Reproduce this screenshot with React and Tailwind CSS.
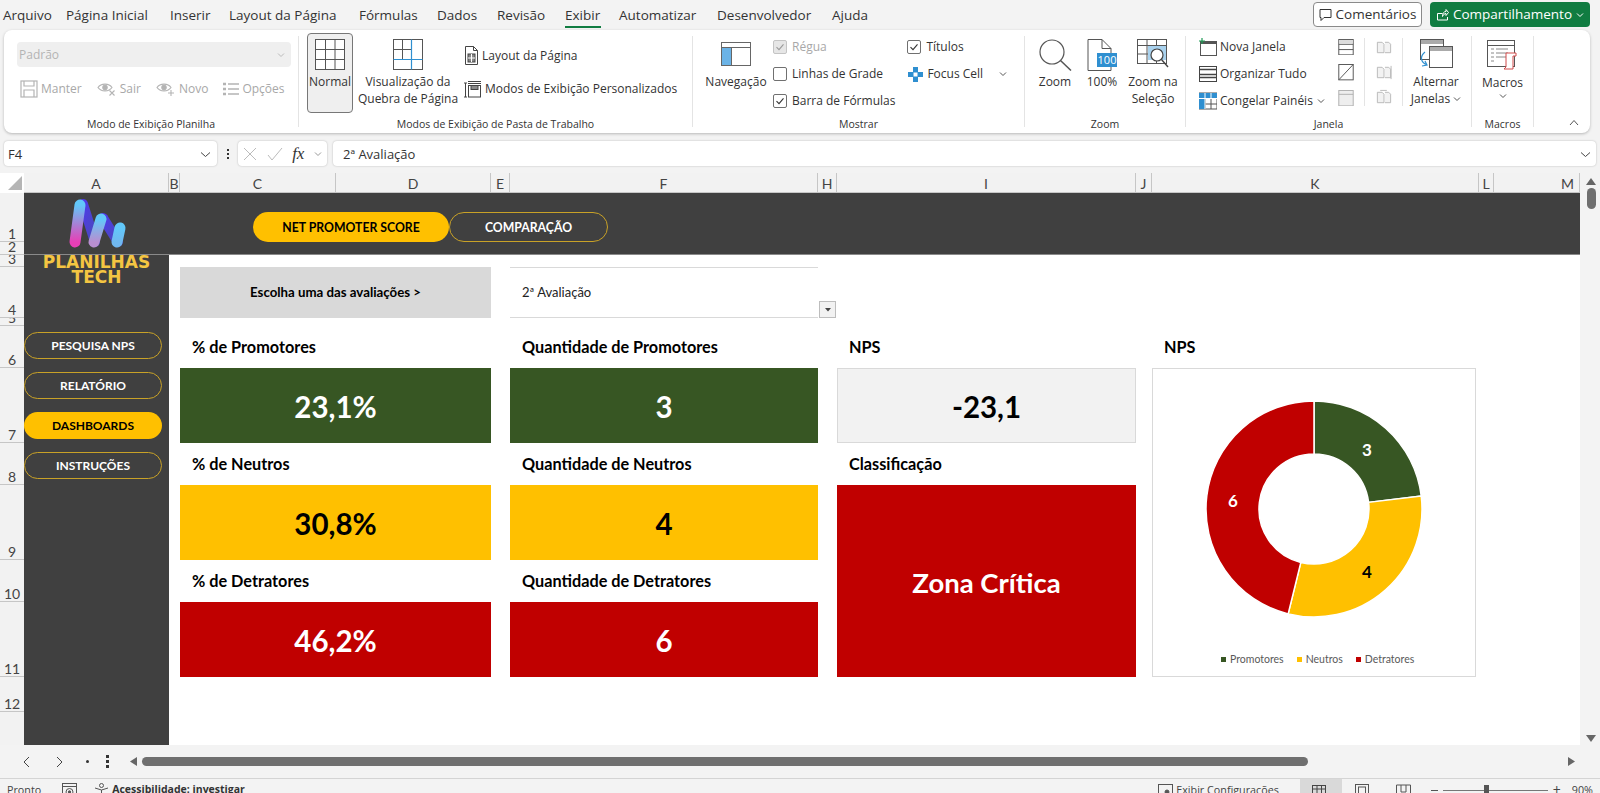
import React from 'react';

const ui = { fontFamily: '"Open Sans", "Noto Sans", sans-serif' };
const cell = { fontFamily: 'Lato, "Open Sans", sans-serif' };

const Chevron = ({ className = '', color = '#555' }) => (
  <svg width="8" height="6" viewBox="0 0 8 6" className={className}><path d="M1 1.500 L4 4.500 L7 1.500" fill="none" stroke={color} strokeWidth="1" /></svg>
);

const Check = ({ checked, muted, className = '' }) => (
  <span className={`flex h-[14px] w-[14px] shrink-0 items-center justify-center rounded-[2px] border ${muted ? 'border-[#c4c4c4] bg-[#e6e6e6]' : 'border-[#707070] bg-white'} ${className}`}>
    {checked && <svg width="10" height="10" viewBox="0 0 10 10"><path d="M1.500 5.200 L4 7.600 L8.500 2.400" fill="none" stroke={muted ? '#9a9a9a' : '#333'} strokeWidth="1.1" /></svg>}
  </span>
);

const GridIcon = ({ blue }) => (
  <svg width="30" height="31" viewBox="0 0 30 31">
    <rect x="0.5" y="0.5" width="29" height="30" fill="#fff" stroke="#555" />
    {blue ? (
      <>
        <path d="M0.5 10.500H18M0.5 20.500H18" stroke="#555" />
        <path d="M9.500 .5V20" stroke="#555" />
        <path d="M18.500 .5V30.500M.5 20.500H29.500" stroke="#2f8fd0" strokeWidth="1.2" />
      </>
    ) : (
      <path d="M.5 10.500H29.500M.5 20.500H29.500M10.500 .5V30.500M20 .5V30.500" stroke="#555" />
    )}
  </svg>
);

const Manter = () => (
  <svg width="18" height="18" viewBox="0 0 18 18" fill="none" stroke="#b4b4b4" strokeWidth="1.2"><rect x="1" y="1" width="16" height="16" /><path d="M4 1v5h10V1M4 17v-7h10v7" /></svg>
);
const Eye = ({ plus }) => (
  <svg width="20" height="16" viewBox="0 0 20 16" fill="none" stroke="#b4b4b4" strokeWidth="1.1">
    <path d="M1 6.500C4 2 12 2 15 6.500C12 11 4 11 1 6.500Z" /><circle cx="8" cy="6.500" r="2.200" fill="#b4b4b4" />
    {plus ? <path d="M15 9v6M12 12h6" /> : <path d="M12.500 9.500l5 5M17.500 9.500l-5 5" />}
  </svg>
);
const Lines = () => (
  <svg width="16" height="14" viewBox="0 0 16 14" stroke="#b4b4b4" strokeWidth="1.3"><path d="M5 2h11M5 7h11M5 12h11" /><path d="M0 2h3M0 7h3M0 12h3" strokeWidth="2.400" /></svg>
);
const PageLayout = () => (
  <svg width="15" height="19" viewBox="0 0 15 19" fill="none" stroke="#444"><path d="M1.500 .5h8l4 4v14h-12z" /><path d="M9.500 .5v4h4" /><rect x="4" y="8" width="7" height="8" fill="#888" stroke="#444" /><path d="M7.500 8v8M4 12h7" stroke="#fff" /></svg>
);
const CustomViews = () => (
  <svg width="18" height="18" viewBox="0 0 18 18" fill="none" stroke="#444"><path d="M4 1.500h13M4 3.500h13" /><rect x="4.500" y="5.500" width="12" height="11.500" /><rect x="7" y="5.500" width="7" height="4" fill="#888" /><path d="M1.500 3v14M0 3h3M0 17h3" /></svg>
);
const Nav = () => (
  <svg width="30" height="24" viewBox="0 0 30 24" className="mt-[3px]"><rect x=".5" y=".5" width="29" height="23" fill="#fff" stroke="#666" /><rect x="1" y="5" width="9" height="18" fill="#6bb3e6" /><path d="M.5 5.500h29M10.500 5.500v18" stroke="#666" /></svg>
);
const FocusCell = () => (
  <svg width="17" height="17" viewBox="0 0 17 17"><rect x="6" y="1" width="5" height="15" fill="#2f8fd0" /><rect x="1" y="6" width="15" height="5" fill="#2f8fd0" /><rect x="6.500" y="6.500" width="4" height="4" fill="#fff" /></svg>
);
const ZoomGlass = () => (
  <svg width="33" height="32" viewBox="0 0 33 32" fill="none" stroke="#555" strokeWidth="1.2"><circle cx="13" cy="13" r="12" fill="#fff" /><path d="M21.500 21.500L32 31.500" strokeWidth="1.500" /></svg>
);
const Hundred = () => (
  <svg width="30" height="32" viewBox="0 0 30 32"><path d="M1 .5h14l9 9v22H1z" fill="#fff" stroke="#555" /><path d="M15 .5v9h9" fill="none" stroke="#555" /><rect x="10" y="14" width="20" height="14" fill="#2f8fd0" /><text x="20" y="25" fontSize="11" textAnchor="middle" fill="#fff" fontFamily="Open Sans">100</text></svg>
);
const ZoomSel = () => (
  <svg width="32" height="32" viewBox="0 0 32 32" fill="none" stroke="#555"><rect x=".5" y=".5" width="29" height="24" fill="#fff" /><path d="M.5 6.500h29M.5 15h29M10 .5v24M19.500 .5v24" /><rect x="11" y="7" width="18" height="14" fill="#a9d2ee" stroke="none" /><circle cx="20" cy="16" r="6" fill="#fff" stroke="#444" strokeWidth="1.2" /><path d="M24.500 20.500L31 28" stroke="#444" strokeWidth="1.400" /></svg>
);
const NewWin = () => (
  <svg width="18" height="18" viewBox="0 0 18 18" fill="none"><rect x="1.500" y="3.500" width="16" height="14" stroke="#555" /><path d="M1 5h16" stroke="#555" strokeWidth="2" /><path d="M3 0v6M0 3h6" stroke="#1f9a55" strokeWidth="1.2" /></svg>
);
const Arrange = () => (
  <svg width="18" height="18" viewBox="0 0 18 18" fill="none" stroke="#444"><rect x=".5" y="1.500" width="17" height="15" /><path d="M.5 4.500h17M.5 9.500h17M.5 12.500h17" strokeWidth="1.400" /></svg>
);
const Freeze = () => (
  <svg width="18" height="18" viewBox="0 0 18 18"><rect x="0" y="1" width="18" height="16" fill="#fff" stroke="#555" /><path d="M6 1v16M12 1v16M0 6.500h18M0 12h18" stroke="#555" /><rect x="0" y="1" width="6" height="16" fill="#2f8fd0" /><rect x="0" y="1" width="18" height="5" fill="#2f8fd0" /><path d="M6 1v16M0 6.500h18M12 1v5" stroke="#fff" /></svg>
);
const SplitA = () => (
  <svg width="16" height="17" viewBox="0 0 16 17" fill="none" stroke="#555"><rect x=".5" y=".5" width="15" height="16" /><path d="M.5 5.500h15M.5 11h15" /><rect x="1" y="1" width="14" height="4" fill="#ddd" stroke="none" /></svg>
);
const SplitB = () => (
  <svg width="16" height="17" viewBox="0 0 16 17" fill="none" stroke="#555"><rect x=".5" y=".5" width="15" height="16" /><path d="M.5 16.500L15.500 .5" /></svg>
);
const SplitC = () => (
  <svg width="16" height="17" viewBox="0 0 16 17" fill="#eee" stroke="#b0b0b0"><rect x=".5" y=".5" width="15" height="16" /><path d="M.5 4.500h15" /></svg>
);
const Mini = ({ v }) => (
  <svg width="18" height="18" viewBox="0 0 18 18" fill="none" stroke="#b8b8b8"><path d="M2 3.500h5l2 2v9H2zM10 3.500h4l2 2v9h-6" fill="#f2f2f2" />{v === 1 && <path d="M16.500 2v14" />}{v === 2 && <path d="M5 1.500h7" />}</svg>
);
const Switch = () => (
  <svg width="36" height="33" viewBox="0 0 36 33" fill="none"><rect x="2.500" y=".5" width="23" height="20" fill="#fff" stroke="#555" /><rect x="3" y="1" width="22" height="4" fill="#aaa" /><rect x="11.500" y="7.500" width="23" height="21" fill="#fff" stroke="#555" /><rect x="12" y="8" width="22" height="4" fill="#aaa" /><path d="M7 13C2 17 2 23 9 26M4 27l5-1-2-4" stroke="#2f8fd0" strokeWidth="1.2" /></svg>
);
const MacroIcon = () => (
  <svg width="31" height="31" viewBox="0 0 31 31" fill="none"><rect x=".5" y=".5" width="27" height="26" fill="#fff" stroke="#555" /><path d="M.5 5.500h27" stroke="#555" /><path d="M4 9h3M9 9h12M4 13h3M9 13h12M4 17h3M9 17h10M4 21h3" stroke="#888" /><path d="M19 13h10v3h-3v13h-9l2-2V13" fill="#fff" stroke="#d04b4b" /></svg>
);

const Big = ({ icon, lines, chevron, className = '' }) => (
  <div className={`flex flex-col items-center ${className}`}>
    <div className="flex h-[31px] items-start justify-center">{icon}</div>
    <div className="mt-[3px] text-center text-[12px] leading-[17px] text-[#333] whitespace-nowrap">
      {lines.map((l, i) => <div key={i} className="flex items-center justify-center gap-[3px]">{l}{chevron && i === lines.length - 1 && <Chevron />}</div>)}
    </div>
  </div>
);

const Group = ({ label, className, children }) => (
  <div className={`flex h-full shrink-0 flex-col ${className}`}>
    <div className="min-h-0 flex-1">{children}</div>
    <div className="flex h-[20px] items-start justify-center pt-[4px] text-[10.5px] leading-[14px] text-[#333]">{label}</div>
  </div>
);

const Divider = () => <div className="mt-[6px] h-[91px] w-px shrink-0 bg-[#e4e4e4]" />;

const Small = ({ icon, text, muted }) => (
  <div className={`flex items-center gap-[3px] text-[12px] ${muted ? 'text-[#a8a8a8]' : 'text-[#333]'}`}>{icon}<span className="whitespace-nowrap">{text}</span></div>
);

const Ribbon = () => (
  <div className="mx-[4px] flex h-[103px] w-[1586px] shrink-0 rounded-[8px] bg-white shadow-[0_1px_3px_rgba(0,0,0,0.25)]">
    <Group label="Modo de Exibição Planilha" className="w-[294px]">
      <div className="px-[13px] pt-[12px]">
        <div className="flex h-[25px] w-[274px] items-center justify-between rounded-[4px] bg-[#efefef] pl-[2px] pr-[6px] text-[12px] text-[#b4b4b4]">Padrão <Chevron color="#bbb" /></div>
        <div className="mt-[13px] flex items-center pl-[3px]">
          <Small muted icon={<Manter />} text="Manter" />
          <div className="ml-[15px]"><Small muted icon={<Eye />} text="Sair" /></div>
          <div className="ml-[15px]"><Small muted icon={<Eye plus />} text="Novo" /></div>
          <div className="ml-[15px]"><Small muted icon={<Lines />} text="Opções" /></div>
        </div>
      </div>
    </Group>
    <Divider />
    <Group label="Modos de Exibição de Pasta de Trabalho" className="w-[393px]">
      <div className="flex pl-[8px] pt-[3px]">
        <div className="flex h-[80px] w-[46px] flex-col items-center rounded-[4px] border border-[#777] bg-[#efefef] pt-[5px]">
          <GridIcon />
          <div className="mt-[3px] text-[12px] leading-[17px] text-[#333]">Normal</div>
        </div>
        <div className="w-[110px] pt-[6px]"><Big icon={<GridIcon blue />} lines={['Visualização da', 'Quebra de Página']} /></div>
        <div className="ml-[1px] flex flex-col gap-[15px] pt-[13px]">
          <Small icon={<PageLayout />} text="Layout da Página" />
          <Small icon={<CustomViews />} text="Modos de Exibição Personalizados" />
        </div>
      </div>
    </Group>
    <Divider />
    <Group label="Mostrar" className="w-[331px]">
      <div className="flex pt-[8px]">
        <div className="w-[80px] pl-[6px] pt-[1px]"><Big icon={<Nav />} lines={['Navegação']} /></div>
        <div className="flex flex-col gap-[9px]">
          <div className="flex items-center gap-[5px] text-[12px] leading-[18px] text-[#a8a8a8]"><Check checked muted />Régua</div>
          <div className="flex items-center gap-[5px] text-[12px] leading-[18px] text-[#333]"><Check />Linhas de Grade</div>
          <div className="flex items-center gap-[5px] text-[12px] leading-[18px] text-[#333]"><Check checked />Barra de Fórmulas</div>
        </div>
        <div className="ml-[12px] flex flex-col gap-[9px]">
          <div className="flex items-center gap-[5px] text-[12px] leading-[18px] text-[#333]"><Check checked />Títulos</div>
          <div className="flex items-center text-[12px] leading-[18px] text-[#333]"><FocusCell /><span className="ml-[3px]">Focus Cell</span><Chevron className="ml-[16px]" /></div>
        </div>
      </div>
    </Group>
    <Divider />
    <Group label="Zoom" className="w-[160px]">
      <div className="flex pl-[2px] pt-[9px]">
        <div className="w-[56px]"><Big icon={<ZoomGlass />} lines={['Zoom']} /></div>
        <div className="w-[38px]"><Big icon={<Hundred />} lines={['100%']} /></div>
        <div className="ml-[4px] w-[56px]"><Big icon={<ZoomSel />} lines={['Zoom na', 'Seleção']} /></div>
      </div>
    </Group>
    <Divider />
    <Group label="Janela" className="w-[285px]">
      <div className="flex pt-[8px]">
        <div className="ml-[13px] flex w-[139px] flex-col gap-[9px]">
          <Small icon={<NewWin />} text="Nova Janela" />
          <Small icon={<Arrange />} text="Organizar Tudo" />
          <div className="flex items-center gap-[4px]"><Small icon={<Freeze />} text="Congelar Painéis" /><Chevron /></div>
        </div>
        <div className="flex h-[68px] w-[27px] flex-col items-start gap-[9px] border-r border-[#e4e4e4] pt-[1px]"><SplitA /><SplitB /><SplitC /></div>
        <div className="flex h-[68px] w-[38px] flex-col items-start gap-[8px] border-r border-[#e4e4e4] pl-[10px] pt-[1px]"><Mini /><Mini v={1} /><Mini v={2} /></div>
        <div className="w-[66px] pt-[1px]"><Big icon={<Switch />} lines={['Alternar', 'Janelas']} chevron /></div>
      </div>
    </Group>
    <Divider />
    <Group label="Macros" className="w-[61px]">
      <div className="pt-[10px]"><Big icon={<MacroIcon />} lines={['Macros']} />
        <div className="mt-[2px] flex justify-center"><Chevron /></div>
      </div>
    </Group>
    <Divider />
    <div className="flex flex-1 items-end justify-end pb-[7px] pr-[11px]">
      <svg width="10" height="7" viewBox="0 0 10 7"><path d="M1 6L5 1.500L9 6" fill="none" stroke="#555" /></svg>
    </div>
  </div>
);

const tabs = [
  ['Arquivo', 'w-[66px] pl-[3px]'], ['Página Inicial', 'w-[104px]'], ['Inserir', 'w-[59px]'], ['Layout da Página', 'w-[130px]'],
  ['Fórmulas', 'w-[78px]'], ['Dados', 'w-[60px]'], ['Revisão', 'w-[68px]'], ['Exibir', 'w-[54px]'], ['Automatizar', 'w-[98px]'], ['Desenvolvedor', 'w-[115px]'], ['Ajuda', 'w-[60px]'],
];

const TopBar = () => (
  <div className="flex h-[30px] shrink-0 items-start text-[13.5px] text-[#333]">
    {tabs.map(([t, w]) => (
      <div key={t} className={`${w} relative shrink-0 whitespace-nowrap pt-[5px] leading-[20px]`}>
        {t}
        {t === 'Exibir' && <span className="absolute left-0 top-[26px] h-[2px] w-[36px] bg-[#107c41]" />}
      </div>
    ))}
    <div className="ml-auto mr-[10px] mt-[2px] flex items-center gap-[8px]">
      <div className="flex h-[25px] w-[109px] items-center justify-center gap-[4px] rounded-[4px] border border-[#8a8a8a] bg-white text-[13.5px]">
        <svg width="13" height="13" viewBox="0 0 13 13" fill="none" stroke="#333"><path d="M1 1.500h11v8H5l-3 3v-3H1z" /></svg>Comentários
      </div>
      <div className="flex h-[25px] w-[160px] items-center justify-center gap-[4px] rounded-[4px] bg-[#107c41] text-[13.5px] text-white">
        <svg width="13" height="13" viewBox="0 0 13 13" fill="none" stroke="#fff"><path d="M1.500 12V5.500h5M1.500 12h10V9M6.500 8.500C6.500 5 8 3.500 10 3.500V1.500l2.500 3-2.500 3V5.500C8.500 5.500 7.500 6.500 6.500 8.500Z" /></svg>Compartilhamento<Chevron color="#fff" />
      </div>
    </div>
  </div>
);

const FormulaBar = () => (
  <div className="mt-[8px] flex h-[25px] shrink-0 items-stretch pl-[4px] pr-[4px] text-[13px] text-[#333]">
    <div className="flex w-[213px] items-center justify-between rounded-[4px] bg-white pl-[4px] pr-[6px] pt-[2px] shadow-[0_0_2px_rgba(0,0,0,0.25)]">F4<svg width="11" height="7" viewBox="0 0 11 7"><path d="M1 1.500L5.500 5.500L10 1.500" fill="none" stroke="#444" /></svg></div>
    <div className="flex w-[21px] flex-col items-center justify-center gap-[2px]"><i className="h-[2px] w-[2px] bg-[#333]" /><i className="h-[2px] w-[2px] bg-[#333]" /><i className="h-[2px] w-[2px] bg-[#333]" /></div>
    <div className="flex w-[89px] items-center justify-between rounded-[4px] bg-white px-[5px] shadow-[0_0_2px_rgba(0,0,0,0.25)]">
      <svg width="14" height="14" viewBox="0 0 14 14"><path d="M1 1l12 12M13 1L1 13" stroke="#bbb" /></svg>
      <svg width="16" height="14" viewBox="0 0 16 14"><path d="M1 8l4 5L15 1" fill="none" stroke="#bbb" /></svg>
      <span className="font-[family-name:Liberation_Serif] text-[17px] italic text-[#333]">fx</span>
      <Chevron color="#999" />
    </div>
    <div className="ml-[6px] flex flex-1 items-center justify-between rounded-[4px] bg-white pl-[10px] pr-[5px] pt-[2px] shadow-[0_0_2px_rgba(0,0,0,0.25)]">2ª Avaliação<svg width="11" height="7" viewBox="0 0 11 7"><path d="M1 1.500L5.500 5.500L10 1.500" fill="none" stroke="#444" /></svg></div>
  </div>
);

const colHeads = [
  ['A', 'col-start-2 justify-center'], ['B', 'col-start-3 justify-center'], ['C', 'col-start-4 justify-center'], ['D', 'col-start-5 justify-center'], ['E', 'col-start-6 justify-center'], ['F', 'col-start-7 justify-center'],
  ['H', 'col-start-8 justify-center'], ['I', 'col-start-9 justify-center'], ['J', 'col-start-10 justify-center'], ['K', 'col-start-11 justify-center'], ['L', 'col-start-12 justify-center'], ['M', 'col-start-13 justify-end pr-[5px]'],
];
const rowHeads = [
  ['1', 'row-start-2'], ['2', 'row-start-3'], ['3', 'row-start-4'], ['4', 'row-start-5'], ['5', 'row-start-6'], ['6', 'row-start-7'],
  ['7', 'row-start-8'], ['8', 'row-start-9'], ['9', 'row-start-10'], ['10', 'row-start-11'], ['11', 'row-start-12'], ['12', 'row-start-13'],
];

const polar = (r, a) => {
  const t = ((a - 90) * Math.PI) / 180;
  return [161 + r * Math.cos(t), 140 + r * Math.sin(t)];
};
const arc = (a0, a1) => {
  const R = 108, r = 55;
  const [x0, y0] = polar(R, a0), [x1, y1] = polar(R, a1), [x2, y2] = polar(r, a1), [x3, y3] = polar(r, a0);
  const big = a1 - a0 > 180 ? 1 : 0;
  return `M${x0} ${y0}A${R} ${R} 0 ${big} 1 ${x1} ${y1}L${x2} ${y2}A${r} ${r} 0 ${big} 0 ${x3} ${y3}Z`;
};

const Donut = () => (
  <div className="col-start-11 row-start-8 row-span-5 flex w-[324px] flex-col border border-[#d9d9d9] bg-white">
    <svg width="322" height="275" viewBox="0 0 322 275" className="shrink-0">
      <path d={arc(0, 83.08)} fill="#375623" stroke="#fff" strokeWidth="1.5" />
      <path d={arc(83.08, 193.85)} fill="#ffc000" stroke="#fff" strokeWidth="1.5" />
      <path d={arc(193.85, 360)} fill="#c00000" stroke="#fff" strokeWidth="1.5" />
      <text x="214" y="87" textAnchor="middle" fontSize="17" fontWeight="700" fill="#fff" fontFamily="Lato">3</text>
      <text x="214" y="209" textAnchor="middle" fontSize="17" fontWeight="700" fill="#000" fontFamily="Lato">4</text>
      <text x="80" y="138" textAnchor="middle" fontSize="17" fontWeight="700" fill="#fff" fontFamily="Lato">6</text>
    </svg>
    <div className="mt-[8px] flex items-center pl-[68px] text-[10.5px] leading-[14px] text-[#595959]">
      <i className="mr-[4px] h-[5px] w-[5px] bg-[#375623]" /><span>Promotores</span>
      <i className="ml-[13px] mr-[4px] h-[5px] w-[5px] bg-[#ffc000]" /><span>Neutros</span>
      <i className="ml-[13px] mr-[4px] h-[5px] w-[5px] bg-[#c00000]" /><span>Detratores</span>
    </div>
  </div>
);

const Label = ({ className, children }) => (
  <div className={`flex items-center pl-[12px] text-[16.25px] font-bold text-black ${className}`}>{children}</div>
);
const Value = ({ className, children }) => (
  <div className={`flex items-center justify-center pt-[3px] font-bold ${className}`}>{children}</div>
);

const Logo = () => (
  <svg width="60" height="52" viewBox="0 0 60 52" fill="none" strokeLinecap="round">
    <defs>
      <linearGradient id="s1" x1="0" y1="0" x2="0" y2="1"><stop offset="0" stopColor="#62c8fa" /><stop offset="1" stopColor="#e83fb5" /></linearGradient>
      <linearGradient id="s2" x1="0" y1="0" x2="0" y2="1"><stop offset="0" stopColor="#62c8fa" /><stop offset="1" stopColor="#b88ed0" /></linearGradient>
      <linearGradient id="s3" x1="0" y1="0" x2="0" y2="1"><stop offset="0" stopColor="#62c8fa" /><stop offset="1" stopColor="#70b8f0" /></linearGradient>
      <linearGradient id="d1" x1="0" y1="0" x2="1" y2="1"><stop offset="0" stopColor="#4f3be8" /><stop offset="1" stopColor="#4a4ab8" /></linearGradient>
    </defs>
    <path d="M16 6L28 44" stroke="url(#d1)" strokeWidth="10" />
    <path d="M36 20L51 44" stroke="url(#d1)" strokeWidth="10" />
    <path d="M13 7L8 44" stroke="url(#s1)" strokeWidth="11" />
    <path d="M34 21L27 44" stroke="url(#s2)" strokeWidth="11" />
    <path d="M53 30L50 44" stroke="url(#s3)" strokeWidth="11" />
  </svg>
);

const navs = [['PESQUISA NPS', false], ['RELATÓRIO', false], ['DASHBOARDS', true], ['INSTRUÇÕES', false]];

const Sheet = () => (
  <div className="mt-[7px] flex h-[572px] shrink-0">
    <div style={cell} className="grid h-[572px] w-[1580px] shrink-0 grid-cols-[24px_145px_11px_156px_155px_19px_308px_19px_299px_16px_327px_15px_86px] grid-rows-[20px_49px_13px_12px_51px_8px_42px_75px_42px_75px_42px_75px_35px_33px] bg-white">
      <div className="col-start-1 row-start-1 flex items-center justify-end pr-[1px]">
        <svg width="16" height="16" viewBox="0 0 16 16"><path d="M15 1V15H1Z" fill="#b5b5b5" /></svg>
      </div>
      {colHeads.map(([c, cls]) => (
        <div key={c} className={`${cls} row-start-1 flex items-center border-r border-b border-[#c6c6c6] bg-[#f2f2f2] pt-[1px] text-[14px] text-[#444]`}>{c}</div>
      ))}
      {rowHeads.map(([r, cls]) => (
        <div key={r} className={`${cls} col-start-1 flex items-end justify-center overflow-hidden border-b border-[#c6c6c6] bg-[#f2f2f2] text-[14px] leading-[15px] text-[#444]`}>{r}</div>
      ))}
      <div className="col-start-1 row-start-14 bg-[#f2f2f2]" />

      <div className="col-start-2 col-span-12 row-start-2 row-span-2 flex items-center border-b border-[#8a8a8a] bg-[#404040]">
        <div className="flex w-[145px] shrink-0 justify-center"><Logo /></div>
        <div className="ml-[84px] mt-[7px] flex items-center">
          <div className="flex h-[30px] w-[196px] items-center justify-center rounded-full bg-[#ffc000] pt-[2px] text-[12.25px] font-bold text-black">NET PROMOTER SCORE</div>
          <div className="flex h-[30px] w-[159px] items-center justify-center rounded-full border border-[#c9a227] pt-[2px] text-[12.25px] font-bold text-white">COMPARAÇÃO</div>
        </div>
      </div>

      <div className="col-start-2 row-start-4 row-span-11 flex flex-col items-stretch bg-[#404040] pr-[7px]">
        <div className="pl-[7px] text-center font-[family-name:DejaVu_Sans] text-[17px] font-bold leading-[15px] text-[#f4c542]">
          <div>PLANILHAS</div><div>TECH</div>
        </div>
        <div className="mt-[47px] flex flex-col gap-[13px]">
          {navs.map(([t, on]) => (
            <div key={t} className={`flex h-[27px] items-center justify-center rounded-full text-[12px] font-bold ${on ? 'bg-[#ffc000] text-black' : 'border border-[#c9a227] text-white'}`}>{t}</div>
          ))}
        </div>
      </div>

      <div className="col-start-4 col-span-2 row-start-5 flex items-center justify-center bg-[#d9d9d9] text-[13.25px] font-bold text-black">Escolha uma das avaliações &gt;</div>
      <div className="col-start-7 row-start-5 flex items-center border-y border-[#d9d9d9] pl-[12px] text-[13px] text-[#222]">2ª Avaliação</div>
      <div className="col-start-8 row-start-5 flex items-end pl-[1px]">
        <div className="flex h-[17px] w-[17px] items-center justify-center border border-[#bdbdbd] bg-[#f2f2f2]">
          <svg width="8" height="5" viewBox="0 0 8 5"><path d="M1 1h6L4 4.500Z" fill="#444" /></svg>
        </div>
      </div>

      <Label className="col-start-4 col-span-2 row-start-7">% de Promotores</Label>
      <Label className="col-start-7 row-start-7">Quantidade de Promotores</Label>
      <Label className="col-start-9 row-start-7">NPS</Label>
      <Label className="col-start-11 row-start-7">NPS</Label>
      <Value className="col-start-4 col-span-2 row-start-8 bg-[#375623] text-[29.5px] text-white">23,1%</Value>
      <Value className="col-start-7 row-start-8 bg-[#375623] text-[29.5px] text-white">3</Value>
      <Value className="col-start-9 row-start-8 border border-[#d9d9d9] bg-[#f2f2f2] text-[29.5px] text-black">-23,1</Value>
      <Donut />

      <Label className="col-start-4 col-span-2 row-start-9">% de Neutros</Label>
      <Label className="col-start-7 row-start-9">Quantidade de Neutros</Label>
      <Label className="col-start-9 row-start-9">Classificação</Label>
      <Value className="col-start-4 col-span-2 row-start-10 bg-[#ffc000] text-[29.5px] text-black">30,8%</Value>
      <Value className="col-start-7 row-start-10 bg-[#ffc000] text-[29.5px] text-black">4</Value>
      <Value className="col-start-9 row-start-10 row-span-3 bg-[#c00000] text-[27.5px] text-white">Zona Crítica</Value>

      <Label className="col-start-4 col-span-2 row-start-11">% de Detratores</Label>
      <Label className="col-start-7 row-start-11">Quantidade de Detratores</Label>
      <Value className="col-start-4 col-span-2 row-start-12 bg-[#c00000] text-[29.5px] text-white">46,2%</Value>
      <Value className="col-start-7 row-start-12 bg-[#c00000] text-[29.5px] text-white">6</Value>
    </div>
    <div className="flex flex-1 flex-col items-center justify-between bg-[#f3f3f3] pb-[3px] pt-[5px]">
      <div className="flex flex-col items-center gap-[3px] pl-[2px]">
        <svg width="10" height="7" viewBox="0 0 10 7"><path d="M5 0L10 7H0Z" fill="#666" /></svg>
        <div className="h-[21px] w-[9px] rounded-full bg-[#6f6f6f]" />
      </div>
      <svg width="10" height="7" viewBox="0 0 10 7" className="ml-[2px]"><path d="M5 7L10 0H0Z" fill="#666" /></svg>
    </div>
  </div>
);

const HBar = () => (
  <div className="flex h-[34px] shrink-0 items-center border-b border-[#d4d4d4] py-[8px]">
    <svg width="8" height="12" viewBox="0 0 8 12" className="ml-[22px]"><path d="M7 1L2 6L7 11" fill="none" stroke="#444" /></svg>
    <svg width="8" height="12" viewBox="0 0 8 12" className="ml-[26px]"><path d="M1 1L6 6L1 11" fill="none" stroke="#444" /></svg>
    <i className="ml-[22px] h-[3px] w-[3px] rounded-full bg-[#333]" />
    <div className="ml-[17px] flex flex-col gap-[2px]"><i className="h-[3px] w-[3px] bg-[#333]" /><i className="h-[3px] w-[3px] bg-[#333]" /><i className="h-[3px] w-[3px] bg-[#333]" /></div>
    <svg width="7" height="9" viewBox="0 0 7 9" className="ml-[21px]"><path d="M0 4.500L7 0V9Z" fill="#666" /></svg>
    <div className="ml-[5px] h-[9px] w-[1166px] rounded-full bg-[#6f6f6f]" />
    <svg width="7" height="9" viewBox="0 0 7 9" className="ml-[260px]"><path d="M7 4.500L0 0V9Z" fill="#666" /></svg>
  </div>
);

const Status = () => (
  <div className="flex h-[22px] shrink-0 items-center text-[10.75px] text-[#444]">
    <span className="ml-[7px]">Pronto</span>
    <svg width="15" height="15" viewBox="0 0 15 15" fill="none" stroke="#555" className="ml-[21px]"><rect x=".5" y=".5" width="14" height="14" /><path d="M.5 3.500h14" /><circle cx="7.500" cy="9" r="3.500" /><circle cx="7.500" cy="9" r="1.200" fill="#555" /></svg>
    <svg width="15" height="15" viewBox="0 0 15 15" fill="none" stroke="#555" className="ml-[17px]"><circle cx="7.500" cy="2.500" r="2" /><path d="M1 5l6.500 2L14 5M7.500 7v3l-3 4M7.500 10l3 4" /></svg>
    <span className="ml-[3px] text-[10.5px] font-bold text-[#333]">Acessibilidade: investigar</span>
    <svg width="15" height="13" viewBox="0 0 15 13" fill="none" stroke="#555" className="ml-auto"><rect x=".5" y=".5" width="14" height="10" /><circle cx="9" cy="8" r="2" fill="#555" /></svg>
    <span className="ml-[3px]">Exibir Configurações</span>
    <div className="ml-[21px] flex h-full w-[42px] items-center justify-center bg-[#d9d9d9]">
      <svg width="14" height="11" viewBox="0 0 14 11" fill="none" stroke="#444" className="-translate-x-[2px]"><rect x=".5" y=".5" width="13" height="10" /><path d="M.5 4h13M5 .5v10M9.500 .5v10" /></svg>
    </div>
    <svg width="14" height="12" viewBox="0 0 14 12" fill="none" stroke="#555" className="ml-[13px]"><rect x=".5" y=".5" width="13" height="11" /><rect x="3.500" y="3" width="7" height="8" /></svg>
    <svg width="15" height="12" viewBox="0 0 15 12" fill="none" stroke="#555" className="ml-[27px]"><path d="M.5 1h14v10h-14zM5 1v7h5V1" /></svg>
    <span className="ml-[20px] h-[1px] w-[7px] bg-[#555]" />
    <div className="relative ml-[5px] h-[1px] w-[105px] bg-[#777]">
      <span className="absolute left-[41px] top-[-5px] h-[11px] w-[5px] bg-[#555]" />
    </div>
    <span className="ml-[5px] text-[14px] leading-none">+</span>
    <span className="ml-[11px] mr-[7px]">90%</span>
  </div>
);

export default function App() {
  return (
    <div style={ui} className="flex h-[793px] w-[1600px] flex-col overflow-hidden bg-[#f3f3f3]">
      <TopBar />
      <Ribbon />
      <FormulaBar />
      <Sheet />
      <HBar />
      <Status />
    </div>
  );
}
